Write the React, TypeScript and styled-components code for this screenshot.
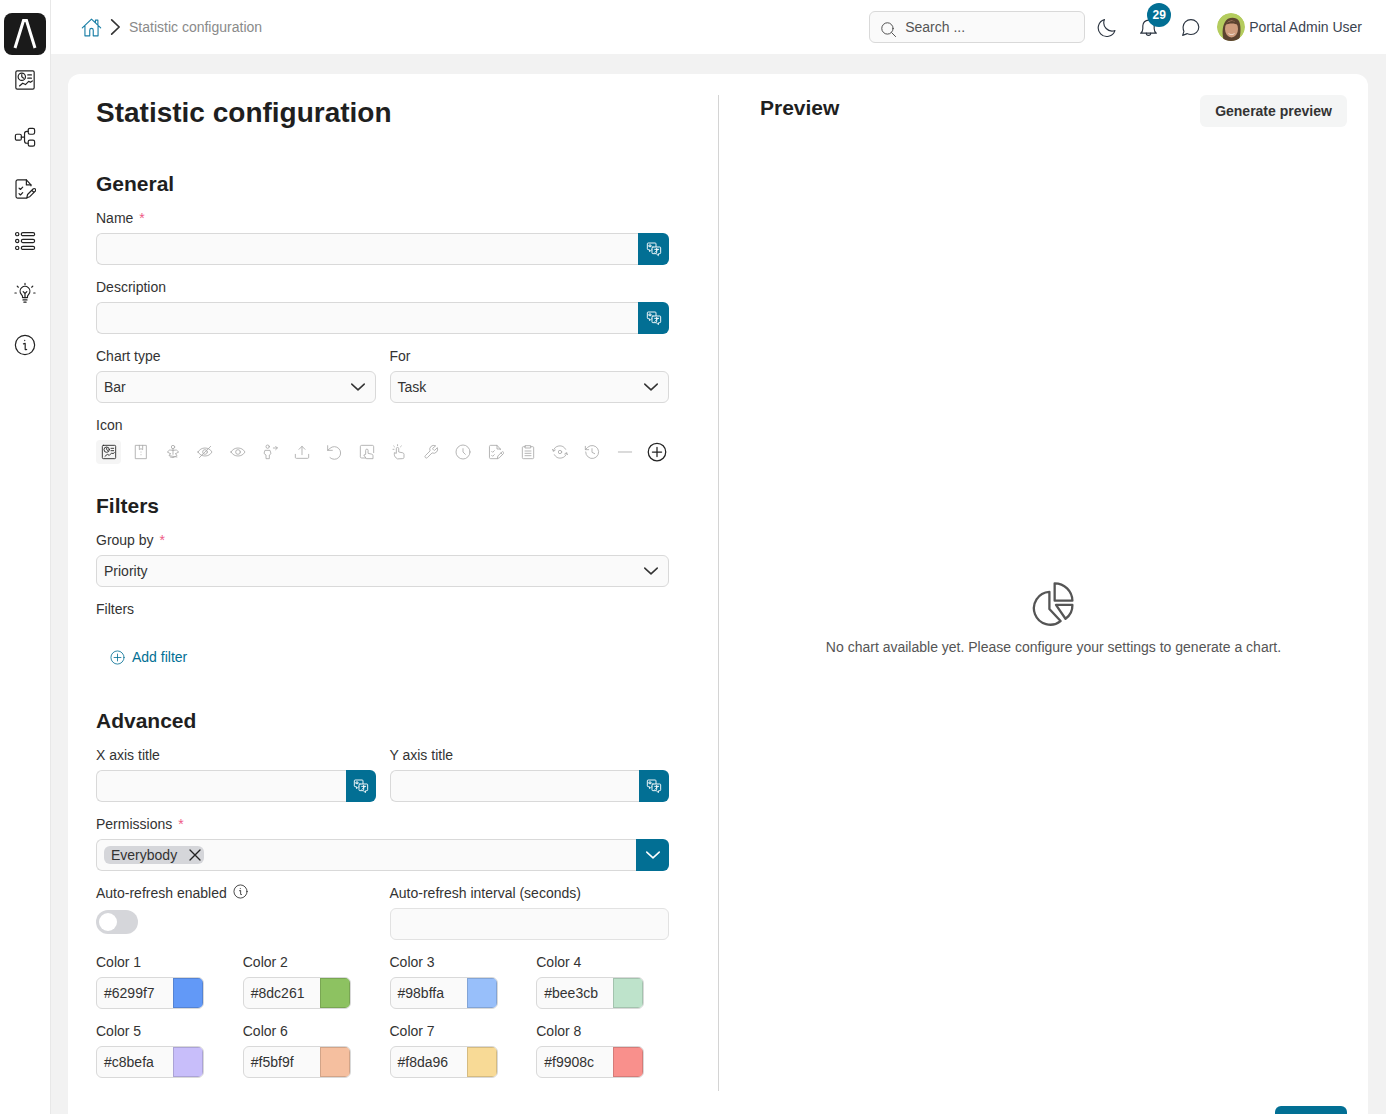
import * as React from "react";
import { FunctionComponent, ReactNode } from "react";
import styled, { createGlobalStyle } from "styled-components";

const teal = "#026f94";
const ink = "#333639";

const GlobalStyle = createGlobalStyle`
    html, body {
        margin: 0;
        height: 100%;
        overflow: hidden;
        background: #f2f2f2;
        font-family: "Liberation Sans", Arial, sans-serif;
        font-size: 14px;
        color: ${ink};
    }
    * { box-sizing: border-box; }
`;

const Svg = styled.svg<{ $size: number; $color?: string; $stroke?: number }>`
    display: block;
    flex: none;
    width: ${(p) => p.$size}px;
    height: ${(p) => p.$size}px;
    fill: none;
    stroke: ${(p) => p.$color || "currentColor"};
    stroke-width: ${(p) => p.$stroke || 1.3};
    stroke-linecap: round;
    stroke-linejoin: round;
`;

type IconProps = { size?: number; color?: string; stroke?: number };

const icon = (body: ReactNode): FunctionComponent<IconProps> => ({ size = 22, color, stroke }) => (
    <Svg viewBox="0 0 24 24" $size={size} $color={color} $stroke={stroke}>
        {body}
    </Svg>
);

const StatIcon = icon(
    <>
        <rect x="2" y="2" width="20" height="20" rx="1.5" />
        <circle cx="8.5" cy="8.5" r="4" />
        <path d="M8.5 6v2.5l2 1.5M15 6.5h4M15 10h4M6 18.5l3.5-3 3 1.5 3.5-3.5 2 1 2-1.5" />
    </>
);
const NodesIcon = icon(
    <>
        <rect x="1.5" y="9" width="6.5" height="6.5" rx="1.6" />
        <rect x="15.5" y="2.5" width="7" height="6.5" rx="1.8" />
        <rect x="15.5" y="15.5" width="7" height="6.5" rx="1.8" />
        <path d="M8 12.2h3.5M15.5 5.8h-1.5a2.5 2.5 0 0 0-2.5 2.5v8a2.5 2.5 0 0 0 2.5 2.5h1.5" />
    </>
);
const FormIcon = icon(
    <>
        <path d="M18.5 8.5v-1L13.5 2H4a1.8 1.8 0 0 0-1.8 1.8v16.4A1.8 1.8 0 0 0 4 22h10" />
        <path d="M13.5 2v5.5h5M5.5 11l1.5 1.5 2.5-2.5M5.500 17l1.500 1.500 2.500-2.500" />
        <path d="M14 21.500l.8-3.500 6-6a1.600 1.600 0 0 1 2.400 2.400l-6 6zM19.500 13.500l2.300 2.300" />
    </>
);
const ListIcon = icon(
    <>
        <circle cx="3.500" cy="4.500" r="1.800" />
        <circle cx="3.500" cy="12" r="1.800" />
        <circle cx="3.500" cy="19.500" r="1.800" />
        <rect x="8" y="2.800" width="14.500" height="3.400" rx="1.700" />
        <rect x="8" y="10.300" width="14.500" height="3.400" rx="1.700" />
        <rect x="8" y="17.800" width="14.500" height="3.400" rx="1.700" />
    </>
);
const BulbIcon = icon(
    <>
        <path d="M9.300 17v-1.300c0-1-.8-1.500-1.500-2.400a5.300 5.300 0 1 1 8.400 0c-.7.9-1.500 1.400-1.500 2.400V17z" />
        <path d="M9.800 19.500h4.400M10.800 22h2.400M12 17v-4.500l-2-2M12 12.500l2-2M12 1.500V3M3.500 4.500l1.200 1.200M20.500 4.500l-1.200 1.200M1 12h1.500M21.500 12H23" />
    </>
);
const InfoIcon = icon(
    <>
        <circle cx="12" cy="12" r="10.500" />
        <path d="M10.300 10.800l1.900-.6v6.300c0 .6.500.9 1.600.3M11.700 7v.2" />
    </>
);
const HomeIcon = icon(
    <>
        <path d="M1.500 12.500L12 2.500l10.500 10M4.500 10.500v11h5.500v-6.500a2 2 0 0 1 4 0v6.500h5.500v-11M16.500 6.500V3.500h2.800v5.500" />
    </>
);
const ChevronRightIcon = icon(<path d="M8 3.500l9 8.500-9 8.500" />);
const ChevronDownIcon = icon(<path d="M4.500 8.500l7.500 7 7.500-7" />);
const SearchIcon = icon(
    <>
        <circle cx="10.500" cy="10.500" r="8" />
        <path d="M16.500 16.500l5.500 5.500" />
    </>
);
const MoonIcon = icon(<path d="M20.500 15.500A9.500 9.500 0 0 1 8.500 3a9.800 9.800 0 1 0 12 12.500z" />);
const BellIcon = icon(
    <>
        <path d="M3 18.500c1.500-1 2.500-2.500 2.500-5V10a6.500 6.500 0 0 1 13 0v3.500c0 2.500 1 4 2.500 5z" />
        <path d="M9.500 18.500a2.500 2.500 0 0 0 5 0" />
    </>
);
const ChatIcon = icon(
    <path d="M12.500 3c5 0 9 3.800 9 8.500S17.500 20 12.500 20c-1.500 0-3-.3-4.200-1L3 21l1.500-4.500c-.7-1.400-1-3-1-5C3.500 6.800 7.500 3 12.500 3z" />
);
const CloseIcon = icon(<path d="M4.500 4.500l15 15M19.500 4.500l-15 15" />);
const TranslateIcon = icon(
    <>
        <path d="M15 8.500V4.300A1.300 1.300 0 0 0 13.700 3H3.300A1.300 1.300 0 0 0 2 4.300v7.400A1.300 1.300 0 0 0 3.300 13H5l.5 3 3-3" />
        <path d="M10.300 9h10.400A1.300 1.300 0 0 1 22 10.300v7.400a1.300 1.300 0 0 1-1.300 1.300H19l-.5 3-3-3h-5.200A1.300 1.300 0 0 1 9 17.700v-7.400A1.300 1.300 0 0 1 10.300 9z" />
        <path d="M5 6h2.500v2.500H5zM13 12.500h6M16 11v7M13.500 17l4.500-4.500" />
    </>
);
const PlusCircleIcon = icon(
    <>
        <circle cx="12" cy="12" r="10.500" />
        <path d="M12 6.500v11M6.500 12h11" />
    </>
);

const BookIcon = icon(<path d="M4 2h16v20H4zM9.500 2v6.500l2.500-1.500 2.500 1.500V2M12 12v.2M12 16v.2" />);
const YogaIcon = icon(
    <>
        <circle cx="12" cy="4.500" r="2.500" />
        <path d="M12 7.500v8M12 9.500l-5-.5-3.500 3 4.500 2.500M12 9.500l5-.5 3.500 3-4.500 2.500M8 14.500l-2 3 6 1 6 1M16 14.500l2 3-6 3-4-1" />
    </>
);
const EyeOffIcon = icon(
    <>
        <path d="M1.500 12c2.500-4 6-6 10.500-6s8 2 10.500 6c-2.500 4-6 6-10.500 6s-8-2-10.500-6z" />
        <circle cx="12" cy="12" r="3.500" />
        <path d="M3.500 20.500l17-17" />
    </>
);
const EyeIcon = icon(
    <>
        <path d="M1.500 12c2.500-4 6-6 10.500-6s8 2 10.500 6c-2.500 4-6 6-10.500 6s-8-2-10.500-6z" />
        <circle cx="12" cy="12" r="3.500" />
    </>
);
const PersonMoveIcon = icon(
    <>
        <circle cx="8.500" cy="4" r="2.500" />
        <path d="M5 9.500h7l1.500 5-2.500 2v5.500H6v-5.500l-2.500-2zM17 6h6M20.500 3.500L23 6l-2.500 2.500" />
    </>
);
const UploadIcon = icon(<path d="M12 16V3.500M7.500 8L12 3.500 16.500 8M2 15.500V20a1.500 1.500 0 0 0 1.500 1.500h17A1.500 1.500 0 0 0 22 20v-4.500" />);
const UndoIcon = icon(<path d="M2.500 2.500v7h7M2.500 9.500l3.500-3a9.500 9.500 0 1 1 0 14" />);
const TouchBoxIcon = icon(
    <>
        <path d="M10 21H4a2 2 0 0 1-2-2V4a2 2 0 0 1 2-2h16a2 2 0 0 1 2 2v9" />
        <path d="M10 15V9.500a1.800 1.800 0 0 1 3.600 0V14l5.400 1.200a2.500 2.500 0 0 1 2 2.400V22H11l-3.500-5z" />
    </>
);
const TapIcon = icon(
    <>
        <path d="M9 22c-2-1.500-4-3.500-4-6v-3l3 1V7a1.800 1.800 0 0 1 3.600 0v5l6 1.200c1 .2 1.900 1.100 1.900 2.300V20a2 2 0 0 1-2 2z" />
        <path d="M9.800 1v1.500M4 3l1.200 1.200M15.500 3l-1.200 1.200M3 8h1.500" />
    </>
);
const WrenchIcon = icon(
    <path d="M14.700 6.300a1 1 0 0 0 0 1.400l1.600 1.600a1 1 0 0 0 1.400 0l3.800-3.800a6 6 0 0 1-7.900 7.900L6.600 20.400a2.100 2.100 0 0 1-3-3l7-7a6 6 0 0 1 7.900-7.900z" />
);
const ClockIcon = icon(
    <>
        <circle cx="12" cy="12" r="10.500" />
        <path d="M12 7v5l3.500 3.500" />
    </>
);
const ClipboardIcon = icon(
    <>
        <path d="M8 4H5a1.500 1.500 0 0 0-1.500 1.500v15A1.500 1.500 0 0 0 5 22h14a1.500 1.500 0 0 0 1.500-1.500v-15A1.500 1.500 0 0 0 19 4h-3" />
        <path d="M8 2.500h8v3.500H8zM7.500 10.500h9M7.500 14h9M7.500 17.500h9" />
    </>
);
const SyncEyeIcon = icon(
    <>
        <path d="M2 10.500A10 10 0 0 1 20.500 8M22 13.500A10 10 0 0 1 3.500 16" />
        <path d="M.500 8l1.800 3 2.700-2M23.500 16l-1.800-3-2.700 2" />
        <circle cx="12" cy="12" r="2.500" />
    </>
);
const HistoryIcon = icon(
    <>
        <path d="M2.500 12a9.700 9.700 0 1 0 3-7L2 8.500M2 3.500v5h5" />
        <path d="M12 7v5.500l4 2" />
    </>
);
const MinusIcon = icon(<path d="M2 12h20" />);

const pickerIcons = [
    StatIcon,
    BookIcon,
    YogaIcon,
    EyeOffIcon,
    EyeIcon,
    PersonMoveIcon,
    UploadIcon,
    UndoIcon,
    TouchBoxIcon,
    TapIcon,
    WrenchIcon,
    ClockIcon,
    FormIcon,
    ClipboardIcon,
    SyncEyeIcon,
    HistoryIcon,
    MinusIcon,
];

const colors = [
    ["Color 1", "#6299f7"],
    ["Color 2", "#8dc261"],
    ["Color 3", "#98bffa"],
    ["Color 4", "#bee3cb"],
    ["Color 5", "#c8befa"],
    ["Color 6", "#f5bf9f"],
    ["Color 7", "#f8da96"],
    ["Color 8", "#f9908c"],
];

const Field: FunctionComponent<{ label: string; required?: boolean; children: ReactNode }> = ({
    label,
    required,
    children,
}) => (
    <div>
        <Label>
            {label}
            {required && <Required>*</Required>}
        </Label>
        {children}
    </div>
);

const TranslateInput: FunctionComponent<{ wide?: boolean }> = ({ wide }) => (
    <InputGroup>
        <GroupInput />
        <TranslateButton $wide={wide}>
            <TranslateIcon size={16} color="#fff" stroke={1.4} />
        </TranslateButton>
    </InputGroup>
);

const Select: FunctionComponent<{ value: string }> = ({ value }) => (
    <SelectBox>
        {value}
        <ChevronDownIcon size={20} color="#333" stroke={1.8} />
    </SelectBox>
);

export default function App() {
    return (
        <Root>
            <GlobalStyle />
            <Sidebar>
                <Logo>
                    <svg width="24" height="32" viewBox="0 0 24 32">
                        <path d="M2 30L10.500 2.500h3L22 30" fill="none" stroke="#fff" strokeWidth="3" />
                    </svg>
                </Logo>
                <NavItem $first>
                    <StatIcon />
                </NavItem>
                <NavItem>
                    <NodesIcon />
                </NavItem>
                <NavItem>
                    <FormIcon />
                </NavItem>
                <NavItem>
                    <ListIcon />
                </NavItem>
                <NavItem>
                    <BulbIcon />
                </NavItem>
                <NavItem>
                    <InfoIcon />
                </NavItem>
            </Sidebar>
            <Main>
                <Topbar>
                    <HomeLink>
                        <HomeIcon size={21} color="#1b7fa6" stroke={1.300} />
                    </HomeLink>
                    <ChevronRightIcon size={20} color="#333" stroke={2} />
                    <Crumb>Statistic configuration</Crumb>
                    <SearchBox>
                        <SearchIcon size={17} color="#444" />
                        Search ...
                    </SearchBox>
                    <TopIcon $gap={12}>
                        <MoonIcon size={21} color="#2b3440" />
                    </TopIcon>
                    <TopIcon $gap={20}>
                        <BellIcon size={21} color="#2b3440" />
                        <Badge>29</Badge>
                    </TopIcon>
                    <TopIcon $gap={21}>
                        <ChatIcon size={21} color="#2b3440" />
                    </TopIcon>
                    <User>
                        <Avatar viewBox="0 0 28 28">
                            <circle cx="14" cy="14" r="14" fill="#b4cc5e" />
                            <path d="M7 28c-2-6-2-14 1-19 2-5 11-6 14-1 2 4 2 12 0 20z" fill="#5c4330" />
                            <ellipse cx="14.500" cy="16" rx="6.500" ry="8.500" fill="#cf9d7e" />
                            <path d="M8 12c2-3 4-4 7-4 3 0 5 1 6 4-3-2-9-2-13 0z" fill="#5c4330" />
                            <path d="M11 20c2 1.500 5 1.500 7 0-1 2.500-6 2.500-7 0z" fill="#f4e9e0" />
                        </Avatar>
                        Portal Admin User
                    </User>
                </Topbar>
                <Content>
                    <Card>
                        <FormColumn>
                            <Title>Statistic configuration</Title>
                            <Section $top={41}>
                                <SectionTitle>General</SectionTitle>
                                <Field label="Name" required>
                                    <TranslateInput wide />
                                </Field>
                                <Field label="Description">
                                    <TranslateInput wide />
                                </Field>
                                <TwoColumns>
                                    <Field label="Chart type">
                                        <Select value="Bar" />
                                    </Field>
                                    <Field label="For">
                                        <Select value="Task" />
                                    </Field>
                                </TwoColumns>
                                <div>
                                    <Label>Icon</Label>
                                    <IconPicker>
                                        {pickerIcons.map((Icon, i) => (
                                            <PickerItem key={i} $selected={i === 0}>
                                                <Icon size={16} color={i === 0 ? "#222" : "#aaa"} stroke={1.300} />
                                            </PickerItem>
                                        ))}
                                        <PickerItem>
                                            <PlusCircleIcon size={20} color="#222" stroke={1.500} />
                                        </PickerItem>
                                    </IconPicker>
                                </div>
                            </Section>
                            <Section $top={29}>
                                <SectionTitle>Filters</SectionTitle>
                                <Field label="Group by" required>
                                    <Select value="Priority" />
                                </Field>
                                <Label>Filters</Label>
                                <AddFilter>
                                    <PlusCircleIcon size={15} color={teal} stroke={1.300} />
                                    Add filter
                                </AddFilter>
                            </Section>
                            <Section $top={39}>
                                <SectionTitle>Advanced</SectionTitle>
                                <TwoColumns>
                                    <Field label="X axis title">
                                        <TranslateInput />
                                    </Field>
                                    <Field label="Y axis title">
                                        <TranslateInput />
                                    </Field>
                                </TwoColumns>
                                <Field label="Permissions" required>
                                    <InputGroup>
                                        <TagInput>
                                            <Tag>
                                                Everybody
                                                <CloseIcon size={16} color="#222" stroke={2} />
                                            </Tag>
                                        </TagInput>
                                        <DropdownButton>
                                            <ChevronDownIcon size={20} color="#fff" stroke={1.8} />
                                        </DropdownButton>
                                    </InputGroup>
                                </Field>
                                <TwoColumns>
                                    <div>
                                        <Label>
                                            Auto-refresh enabled
                                            <LabelInfo>
                                                <InfoIcon size={15} color="#222" stroke={1.300} />
                                            </LabelInfo>
                                        </Label>
                                        <Toggle />
                                    </div>
                                    <Field label="Auto-refresh interval (seconds)">
                                        <PlainInput />
                                    </Field>
                                </TwoColumns>
                                <ColorGrid>
                                    {colors.map(([label, value]) => (
                                        <Field key={label} label={label}>
                                            <ColorInput>
                                                <ColorValue>{value}</ColorValue>
                                                <Swatch $color={value} />
                                            </ColorInput>
                                        </Field>
                                    ))}
                                </ColorGrid>
                            </Section>
                        </FormColumn>
                        <PreviewColumn>
                            <PreviewHeader>
                                <PreviewTitle>Preview</PreviewTitle>
                                <GenerateButton>Generate preview</GenerateButton>
                            </PreviewHeader>
                            <EmptyState>
                                <PieIcon viewBox="96 30 140 140">
                                    <path d="M152 66A50 50 0 1 0 186 155L152 118Z" />
                                    <path d="M168 40A54 54 0 0 1 222 93H168Z" />
                                    <path d="M172 106H222A50 50 0 0 1 201 148Z" />
                                </PieIcon>
                                No chart available yet. Please configure your settings to generate a chart.
                            </EmptyState>
                        </PreviewColumn>
                        <Footer>
                            <SaveButton />
                        </Footer>
                    </Card>
                </Content>
            </Main>
        </Root>
    );
}

const Root = styled.div`
    display: grid;
    grid-template-columns: 51px 1fr;
    height: 100vh;
    overflow: hidden;
`;

const Sidebar = styled.aside`
    display: flex;
    flex-direction: column;
    align-items: center;
    gap: 30px;
    padding-top: 13px;
    background: #fff;
    border-right: 1px solid #e8e8e8;
    color: #222;
`;

const Logo = styled.div`
    display: flex;
    align-items: center;
    justify-content: center;
    width: 42px;
    height: 42px;
    margin-bottom: -16px;
    border-radius: 8px;
    background: #1a1a1a;
`;

const NavItem = styled.div<{ $first?: boolean }>`
    margin-bottom: ${(p) => (p.$first ? 5 : 0)}px;
`;

const Main = styled.div`
    display: flex;
    flex-direction: column;
    min-width: 0;
`;

const Topbar = styled.header`
    display: flex;
    align-items: center;
    flex: none;
    height: 54px;
    padding: 0 24px 0 30px;
    background: #fff;
`;

const HomeLink = styled.div`
    margin-right: 3px;
`;

const Crumb = styled.span`
    margin-left: 4px;
    color: #8a8a8a;
`;

const SearchBox = styled.div`
    display: flex;
    align-items: center;
    gap: 8px;
    width: 216px;
    height: 32px;
    margin-left: auto;
    padding: 0 10px;
    border: 1px solid #d9d9d9;
    border-radius: 6px;
    background: #fafafa;
    color: #555;

    svg {
        margin-top: 5px;
    }
`;

const TopIcon = styled.div<{ $gap: number }>`
    position: relative;
    margin-left: ${(p) => p.$gap}px;
`;

const Badge = styled.span`
    position: absolute;
    top: -14px;
    left: 9px;
    width: 24px;
    height: 24px;
    border-radius: 50%;
    background: ${teal};
    color: #fff;
    font-size: 12px;
    font-weight: 700;
    line-height: 24px;
    text-align: center;
`;

const User = styled.div`
    display: flex;
    align-items: center;
    gap: 4px;
    margin-left: 16px;
    color: #3a4350;
`;

const Avatar = styled.svg`
    width: 28px;
    height: 28px;
    border-radius: 50%;
`;

const Content = styled.main`
    padding: 20px 18px 0 17px;
`;

const Card = styled.div`
    display: grid;
    grid-template-columns: 651px 1fr;
    padding-top: 21px;
    border-radius: 12px;
    background: #fff;
`;

const FormColumn = styled.div`
    height: 996px;
    padding: 0 49px 0 28px;
    border-right: 1px solid #d4d4d4;
`;

const Title = styled.h1`
    margin: 1px 0 0;
    color: #1f1f1f;
    font-size: 28px;
    font-weight: 700;
    line-height: 34px;
`;

const Section = styled.section<{ $top?: number }>`
    display: flex;
    flex-direction: column;
    gap: 12px;
    margin-top: ${(p) => p.$top ?? 42}px;
`;

const SectionTitle = styled.h2`
    margin: 0 0 -1px;
    color: #1f1f1f;
    font-size: 21px;
    font-weight: 700;
    line-height: 26px;
`;

const Label = styled.div`
    display: flex;
    align-items: center;
    height: 20px;
    margin-bottom: 5px;
    color: #333;
    line-height: 20px;
`;

const Required = styled.span`
    margin: 0 0 0 6px;
    color: #ee5a85;
    font-size: 14px;
`;

const LabelInfo = styled.span`
    margin: -4px 0 0 6px;
`;

const TwoColumns = styled.div`
    display: grid;
    grid-template-columns: 1fr 1fr;
    column-gap: 14px;
`;

const InputGroup = styled.div`
    display: flex;
    height: 32px;
`;

const GroupInput = styled.div`
    flex: 1;
    min-width: 0;
    border: 1px solid #d9d9d9;
    border-right: 0;
    border-radius: 6px 0 0 6px;
    background: #fafafa;
`;

const TranslateButton = styled.div<{ $wide?: boolean }>`
    display: flex;
    align-items: center;
    justify-content: center;
    flex: none;
    width: ${(p) => (p.$wide ? 31 : 30)}px;
    border-radius: 0 6px 6px 0;
    background: ${teal};
`;

const DropdownButton = styled(TranslateButton)`
    width: 33px;
`;

const SelectBox = styled.div`
    display: flex;
    align-items: center;
    justify-content: space-between;
    height: 32px;
    padding: 0 7px 0 7px;
    border: 1px solid #d9d9d9;
    border-radius: 6px;
    background: #fafafa;
    color: #333;
`;

const PlainInput = styled.div`
    height: 32px;
    border: 1px solid #e2e2e2;
    border-radius: 6px;
    background: #fafafa;
`;

const IconPicker = styled.div`
    display: grid;
    grid-template-columns: repeat(18, 32.25px);
    height: 24px;
`;

const PickerItem = styled.div<{ $selected?: boolean }>`
    display: flex;
    align-items: center;
    justify-content: center;
    width: 25px;
    height: 24px;
    border-radius: 4px;
    background: ${(p) => (p.$selected ? "#f5f5f5" : "transparent")};
`;

const AddFilter = styled.div`
    display: flex;
    align-items: center;
    gap: 7px;
    height: 24px;
    margin: 9px 0 0 14px;
    color: ${teal};
`;

const TagInput = styled.div`
    display: flex;
    align-items: center;
    flex: 1;
    padding-left: 7px;
    border: 1px solid #d9d9d9;
    border-right: 0;
    border-radius: 6px 0 0 6px;
    background: #fafafa;
`;

const Tag = styled.div`
    display: flex;
    align-items: center;
    gap: 10px;
    height: 18px;
    padding: 0 1px 0 7px;
    border-radius: 6px;
    background: #d5d6da;
    color: #333;
`;

const Toggle = styled.div`
    position: relative;
    width: 42px;
    height: 24px;
    margin-top: 7px;
    border-radius: 12px;
    background: #d5d6da;

    &::after {
        content: "";
        position: absolute;
        top: 3px;
        left: 3px;
        width: 18px;
        height: 18px;
        border-radius: 50%;
        background: #fff;
    }
`;

const ColorGrid = styled.div`
    display: grid;
    grid-template-columns: repeat(4, 1fr);
    gap: 12px 14px;
`;

const ColorInput = styled.div`
    display: flex;
    width: 108px;
    height: 32px;
    border: 1px solid #d9d9d9;
    border-radius: 6px;
    background: #fafafa;
    overflow: hidden;
`;

const ColorValue = styled.span`
    flex: 1;
    padding-left: 7px;
    color: #333;
    line-height: 30px;
`;

const Swatch = styled.span<{ $color: string }>`
    flex: none;
    width: 30px;
    background: ${(p) => p.$color};
    box-shadow: inset 0 0 0 1px rgba(0, 0, 0, 0.14);
`;

const PreviewColumn = styled.div`
    display: flex;
    flex-direction: column;
    padding: 0 21px 0 41px;
`;

const PreviewHeader = styled.div`
    display: flex;
    align-items: flex-start;
    justify-content: space-between;
    height: 32px;
`;

const PreviewTitle = styled.h2`
    margin: 0;
    color: #1f1f1f;
    font-size: 21px;
    font-weight: 700;
    line-height: 26px;
`;

const GenerateButton = styled.div`
    width: 147px;
    height: 32px;
    border-radius: 6px;
    background: #f4f5f5;
    color: #333;
    font-weight: 700;
    line-height: 32px;
    text-align: center;
`;

const EmptyState = styled.div`
    display: flex;
    flex: 1;
    flex-direction: column;
    align-items: center;
    justify-content: center;
    gap: 13px;
    padding-top: 17px;
    color: #555;
`;

const PieIcon = styled.svg`
    width: 46px;
    height: 46px;
    fill: none;
    stroke: #555;
    stroke-width: 7;
    stroke-linejoin: round;
`;

const Footer = styled.div`
    display: flex;
    grid-column: 1 / -1;
    justify-content: flex-end;
    padding: 15px 21px 20px 0;
`;

const SaveButton = styled.div`
    width: 72px;
    height: 32px;
    border-radius: 6px;
    background: ${teal};
`;
